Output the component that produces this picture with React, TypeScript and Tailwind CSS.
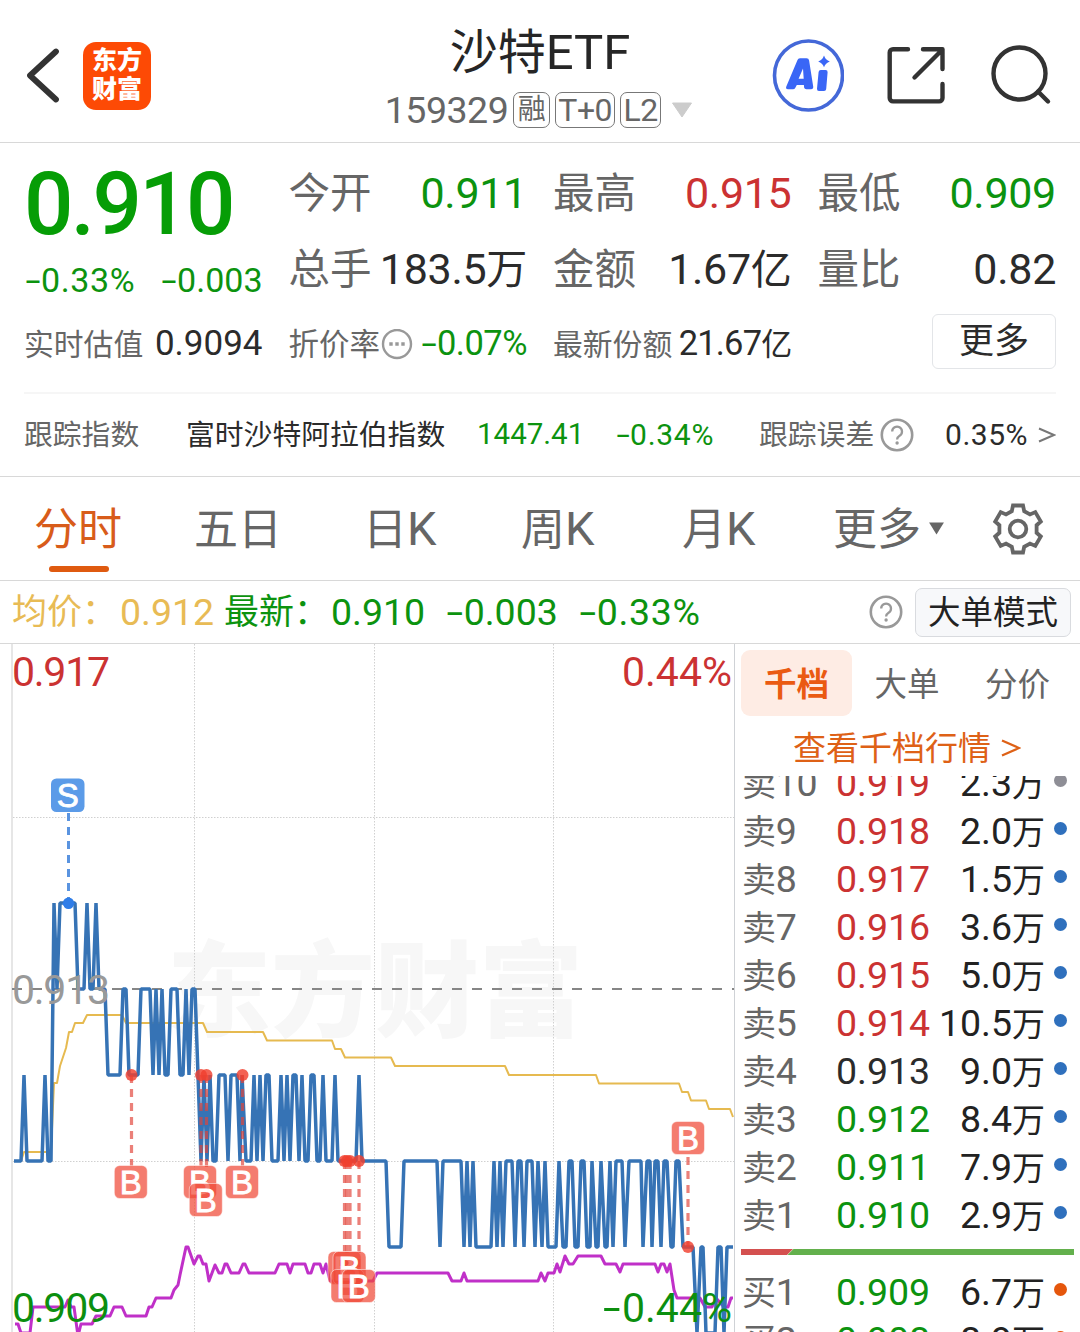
import { Fragment } from "react";
import clsx from "clsx";

const GREEN = "text-[#0c930f]";
const RED = "text-[#cb3232]";
const DARK = "text-[#2b2b2b]";
const GREY = "text-[#666666]";

// The hyphen is stretched so it reads as a minus sign of digit width.
function Num({ children, className }: { children: string; className?: string }) {
  return (
    <span className={clsx("whitespace-nowrap", className)}>
      {children.split(/(-)/).map((part, i) =>
        part === "-" ? (
          <span key={i} className="inline-block w-[0.47em] origin-center scale-x-[1.6] text-center tracking-normal">
            -
          </span>
        ) : (
          <Fragment key={i}>{part}</Fragment>
        ),
      )}
    </span>
  );
}

function Help({ className }: { className?: string }) {
  return (
    <svg viewBox="0 0 34 34" className={clsx("shrink-0", className)} fill="none" stroke="#999" strokeWidth="2.6">
      <circle cx="17" cy="17" r="15.2" />
      <path d="M12.2 13.6a4.9 4.9 0 1 1 7.4 4.2c-1.7 1.1-2.5 1.9-2.5 3.6" strokeWidth="2.3" />
      <circle cx="17.1" cy="25" r="1.7" fill="#999" stroke="none" />
    </svg>
  );
}

function Header() {
  return (
    <header className="flex h-[143px] border-b border-[#d8d8d8]">
      <div className="flex w-[384px] shrink-0 pl-[26px] pt-[41px]">
        <svg viewBox="0 0 34 70" className="h-[70px] w-[34px]" fill="none" stroke="#333" strokeWidth="5.8" strokeLinecap="round" strokeLinejoin="round">
          <path d="M30 10.500 4 34.500l26 24" />
        </svg>
        <div className="ml-[23px] mt-[0.500px] flex h-[68px] w-[68px] flex-col items-center justify-center rounded-[13px] bg-[#fd4a05] pb-px text-[25px] leading-[29px] font-black text-white">
          <span>东方</span>
          <span>财富</span>
        </div>
      </div>

      <div className="flex w-[312px] shrink-0 flex-col items-center">
        <h1 className="mt-[23px] flex items-baseline text-[48px] leading-[60px] text-[#262626]">
          沙特<span className="text-[49px] leading-[60px]">ETF</span>
        </h1>
        <div className={clsx("mt-[8px] flex items-center", GREY)}>
          <span className="mr-[5px] text-[37.500px] leading-[38px] tracking-[-0.5px]">159329</span>
          <span className="mr-[5px] h-[36px] w-[37px] rounded-[7px] border border-[#777] text-center text-[28px] leading-[34px]">融</span>
          <span className="mr-[5px] h-[36px] w-[60px] rounded-[7px] border border-[#777] text-center text-[32px] leading-[34px] tracking-[-0.5px]">T+0</span>
          <span className="h-[36px] w-[41px] rounded-[7px] border border-[#777] text-center text-[32px] leading-[34px] tracking-[-0.5px]">L2</span>
          <svg viewBox="0 0 22 16" className="ml-[10px] mr-[2px] h-4 w-[22px]">
            <path d="M1.500 1h19L11 15z" fill="#ccc" stroke="#ccc" strokeLinejoin="round" />
          </svg>
        </div>
      </div>

      <div className="flex pl-[76px] pt-[39px]">
        <svg viewBox="0 0 72 74" className="h-[74px] w-[72px]" fill="#3a66f6">
          <ellipse cx="36.500" cy="36.500" rx="34" ry="34.500" fill="none" stroke="#4468d8" strokeWidth="3.600" />
          <path
            fillRule="evenodd"
            d="M25.500 21Q26 19.300 28 19.300H34.500Q36.800 19.300 37.100 21.500L41.200 47.500Q41.500 50.300 39 50.300H34.500Q32.400 50.300 32.100 48.500L31.900 46H24.800L23.200 49Q22.500 50.300 21 50.300H16Q13.300 50.300 14.300 47.500ZM31 29.500 26.600 39.800H31.700Z"
          />
          <path d="M48.800 31H53.500Q55.800 31 55.600 33.300L54.200 50Q54 52 52 52H47Q44.800 52 45 49.800L46.600 33Q46.800 31 48.800 31Z" />
          <path d="M52 16.500Q53.500 21 57.800 22.400 53.500 23.800 52 28.300 50.500 23.800 46.200 22.400 50.500 21 52 16.500Z" />
        </svg>
        <svg viewBox="0 0 60 60" className="ml-[42px] mt-[6px] h-[60px] w-[60px]" fill="none" stroke="#333" strokeWidth="4.400" strokeLinecap="round" strokeLinejoin="round">
          <path d="M22 4.200H7a3.300 3.300 0 0 0-3.300 3.300v45.600a3.300 3.300 0 0 0 3.300 3.300h46.200a3.300 3.300 0 0 0 3.300-3.300V39M37 4.200h19.500V24M55.500 5.500 28.500 32.500" />
        </svg>
        <svg viewBox="0 0 62 62" className="ml-[44px] mt-[6px] h-[62px] w-[62px]" fill="none" stroke="#333" strokeWidth="4.400" strokeLinecap="round">
          <ellipse cx="29.500" cy="28.500" rx="26" ry="26" />
          <path d="m48 46.500 10 10" />
        </svg>
      </div>
    </header>
  );
}

type Stat = { label: string; value: string; unit?: string; tone: string };

const stats: Stat[] = [
  { label: "今开", value: "0.911", tone: GREEN },
  { label: "最高", value: "0.915", tone: RED },
  { label: "最低", value: "0.909", tone: GREEN },
  { label: "总手", value: "183.5", unit: "万", tone: DARK },
  { label: "金额", value: "1.67", unit: "亿", tone: DARK },
  { label: "量比", value: "0.82", tone: DARK },
];

function Quote() {
  return (
    <section className="h-[334px] border-b border-[#d8d8d8] px-6">
      <div className="grid h-[251px] grid-cols-4 grid-rows-[76px_78px_62px] gap-x-[26px] border-b-2 border-[#f6f6f6] pt-[29px] leading-none">
        <div className={clsx("row-span-2 flex flex-col", GREEN)}>
          <span className="mt-[-11px] text-[87px] font-medium tracking-[-2.6px] text-[#069d06]">0.910</span>
          <div className="mt-[15px] flex justify-between pl-px text-[34px]">
            <Num className="tracking-[0.6px]">-0.33%</Num>
            <Num>-0.003</Num>
          </div>
        </div>
        {stats.map((s) => (
          <div key={s.label} className="flex items-baseline justify-between whitespace-nowrap">
            <span className={clsx("text-[41.500px]", GREY)}>{s.label}</span>
            <span className={clsx("text-[43px] tracking-[-0.3px]", s.tone)}>
              {s.value}
              {s.unit && <span className="text-[41px]">{s.unit}</span>}
            </span>
          </div>
        ))}

        <div className="flex items-baseline justify-between">
          <span className={clsx("text-[29.800px]", GREY)}>实时估值</span>
          <span className={clsx("text-[35px]", DARK)}>0.9094</span>
        </div>
        <div className="flex items-baseline justify-between">
          <span className={clsx("flex items-baseline text-[30.500px]", GREY)}>
            折价率
            <svg viewBox="0 0 32 32" className="my-[-4px] ml-px h-8 w-8 self-center">
              <circle cx="16" cy="15" r="14" fill="none" stroke="#999" strokeWidth="2.400" />
              <path d="M8.300 15h3.400m2.600 0h3.400m2.600 0h3.400" stroke="#999" strokeWidth="3.400" />
            </svg>
          </span>
          <Num className={clsx("text-[34.500px] tracking-[-0.500px]", GREEN)}>-0.07%</Num>
        </div>
        <div className="flex items-baseline justify-between whitespace-nowrap">
          <span className={clsx("text-[29.800px]", GREY)}>最新份额</span>
          <span className={clsx("text-[34.500px] tracking-[-0.8px]", DARK)}>
            21.67<span className="text-[31px]">亿</span>
          </span>
        </div>
        <button className="mt-[-12px] h-[55px] w-[124px] justify-self-end rounded-[6px] border-[1.500px] border-[#e3e5e8] text-[35px] leading-[52px] text-[#2b2b2b]">
          更多
        </button>
      </div>

      <div className="flex h-[82px] items-center whitespace-nowrap text-[28.800px] leading-none">
        <span className={clsx("w-[162px]", GREY)}>跟踪指数</span>
        <span className={clsx("w-[291px]", DARK)}>富时沙特阿拉伯指数</span>
        <Num className={clsx("w-[139px] text-[29.500px]", GREEN)}>1447.41</Num>
        <Num className={clsx("mt-[-1px] w-[143px] text-[30px] tracking-[0.7px]", GREEN)}>-0.34%</Num>
        <span className={GREY}>跟踪误差</span>
        <Help className="ml-[6px] mt-[-1px] h-[34px] w-[34px]" />
        <span className={clsx("ml-auto mt-[-1px] text-[30px] tracking-[0.5px]", DARK)}>0.35%</span>
        <svg viewBox="0 0 18 18" className="ml-[10px] h-[18px] w-[18px]" fill="none" stroke="#777" strokeWidth="2">
          <path d="m1 2.500 15 6.500-15 6.500" />
        </svg>
      </div>
    </section>
  );
}

const periods = [
  { label: "分时", letter: "", width: "w-[160px]" },
  { label: "五日", letter: "", width: "w-[169px]" },
  { label: "日", letter: "K", width: "w-[158px]" },
  { label: "周", letter: "K", width: "w-[161px]" },
  { label: "月", letter: "K", width: "w-[151px]" },
];

function PeriodTabs() {
  return (
    <nav className={clsx("flex h-[104px] border-b border-[#d8d8d8] pl-[34px] text-[44px] leading-[107px]", GREY)}>
      {periods.map((p, i) => (
        <div key={p.label} className={clsx("relative shrink-0", p.width, i === 0 && "text-[#d85c1a]")}>
          {p.label}
          {p.letter && <span className="text-[47px] leading-none">{p.letter}</span>}
          {i === 0 && <span className="absolute left-[15px] top-[89px] h-[6px] w-[60px] rounded-full bg-[#df5a10]" />}
        </div>
      ))}
      <span>更多</span>
      <svg viewBox="0 0 16 14" className="ml-[8px] mt-[45px] h-[13px] w-[15px]">
        <path d="M0 .5h16L8 13.500z" fill="#666" />
      </svg>
      <svg viewBox="-27 -27 54 54" className="ml-[47px] mt-[24.500px] h-[54px] w-[54px]" fill="none" stroke="#666" strokeWidth="3.800">
        <path d="M-5-23.500H5L6.200-17.800 12-14.600 17.300-16.900 22.800-7.500 18.600-3.800V3.800L22.800 7.500 17.300 16.900 12 14.600 6.200 17.800 5 23.500H-5L-6.200 17.800-12 14.600-17.300 16.900-22.800 7.500-18.600 3.800V-3.800L-22.800-7.500-17.300-16.900-12-14.600-6.200-17.800Z" />
        <circle r="8.300" />
      </svg>
    </nav>
  );
}

function PriceBar() {
  return (
    <div className="flex h-[63px] items-center border-b border-[#d8d8d8] pl-3 pr-[9px] text-[37.500px] leading-[62px] whitespace-nowrap">
      <span className="mt-[2px] w-[108px] text-[35px] text-[#e8bb55]">均价：</span>
      <span className="w-[104px] text-[#e8bb55]">0.912</span>
      <span className={clsx("mt-[2px] w-[107px] text-[35px]", GREEN)}>最新：</span>
      <Num className={clsx("w-[115px]", GREEN)}>0.910</Num>
      <Num className={clsx("w-[133px]", GREEN)}>-0.003</Num>
      <Num className={clsx("tracking-[0.7px]", GREEN)}>-0.33%</Num>
      <Help className="ml-auto mr-3 h-[34px] w-[34px]" />
      <button className="h-[49px] w-[156px] rounded-[7px] border-[1.500px] border-[#d9dbdf] bg-[#f7f8fa] text-[32.500px] leading-[48px] text-[#222]">
        大单模式
      </button>
    </div>
  );
}

// [x, price] – price in thousandths above 0.910
const price: [number, number][] = [
  [14, 1], [21, 1], [24, 2], [27, 1], [42, 1], [45, 2], [48, 1], [51, 1], [54, 4], [57, 3], [60, 4], [75, 4],
  [78, 3], [84, 3], [87, 4], [90, 3], [93, 3], [96, 4], [99, 3], [105, 3], [108, 2], [120, 2], [123, 3], [126, 3],
  [129, 2], [138, 2], [141, 3], [150, 3], [153, 2], [156, 3], [159, 2], [162, 3], [165, 2], [168, 2], [171, 3],
  [177, 3], [180, 2], [183, 2], [186, 3], [189, 2], [192, 3], [195, 3], [198, 2], [201, 1], [204, 2], [207, 1],
  [210, 2], [213, 1], [216, 1], [219, 2], [225, 2], [228, 1], [231, 2], [237, 2], [240, 1], [242, 2], [246, 1],
  [251, 1], [254, 2], [257, 1], [260, 2], [263, 1], [266, 2], [269, 2], [272, 1], [278, 1], [281, 2], [284, 1],
  [287, 2], [290, 1], [293, 2], [296, 2], [299, 1], [302, 2], [305, 1], [308, 1], [311, 2], [314, 2], [317, 1],
  [320, 1], [323, 2], [326, 1], [332, 1], [335, 2], [338, 1], [356, 1], [359, 2], [362, 1], [386, 1], [389, 0],
  [401, 0], [404, 1], [437, 1], [440, 0], [443, 1], [461, 1], [464, 0], [467, 1], [470, 0], [473, 1], [476, 0],
  [491, 0], [494, 1], [497, 0], [500, 1], [503, 0], [506, 1], [512, 1], [515, 0], [518, 1], [521, 1], [524, 0],
  [527, 1], [532, 1], [535, 0], [538, 1], [542, 0], [545, 1], [548, 0], [556, 0], [559, 1], [563, 0], [566, 0],
  [569, 1], [572, 1], [575, 0], [578, 0], [581, 1], [584, 1], [587, 0], [590, 0], [592, 1], [596, 0], [598, 0],
  [601, 1], [605, 0], [607, 0], [610, 1], [613, 0], [616, 1], [622, 1], [625, 0], [629, 1], [641, 1], [643, 0],
  [647, 1], [650, 1], [652, 0], [655, 1], [658, 1], [661, 0], [664, 1], [667, 1], [671, 0], [673, 0], [676, 1],
  [679, 1], [683, 0], [693, 0], [697, -1], [701, 0], [703, 0], [706, -1], [715, -1], [718, 0], [721, 0], [724, -1],
  [727, 0], [733, 0],
];

const pricePoints = price.map(([x, p]) => `${x},${1247 - 86 * p}`).join(" ");

const averagePoints =
  "14,1161 21,1161 24,1152 51,1152 54,1083 57,1083 60,1066 66,1048 69,1032 72,1032 75,1023 83,1023 87,1015 122,1015 126,1023 203,1023 207,1032 263,1032 267,1040.5 332,1040.5 335,1049 341,1049 345,1057.5 391,1057.5 395,1066 505,1066 509,1075 596,1075 599,1083.5 679,1083.5 682,1092 688,1092 691,1100.5 706,1100.5 709,1109 730,1109 733,1117";

const netValuePoints =
  "15,1324 18,1324 21,1333 30,1333 33,1307 65,1307 68,1300 71,1307 74,1307 78,1336 81,1324 92,1324 96,1316 110,1316 114,1307 122,1307 126,1316 146,1316 149,1307 152,1307 156,1298 171,1298 174,1290 178,1285 180,1275 186,1247 188,1247 194,1264 198,1256 200,1256 203,1264 206,1264 209,1281 215,1265 219,1273 222,1273 225,1264 227,1264 231,1273 239,1273 243,1264 245,1264 249,1273 275,1273 279,1264 287,1264 290,1273 293,1264 305,1264 308,1273 311,1273 314,1264 320,1264 323,1273 326,1264 330,1281 373,1281 377,1273 448,1273 452,1281 461,1281 464,1273 467,1281 538,1281 541,1273 545,1281 548,1273 554,1273 557,1264 560,1272 565,1256 569,1264 573,1264 578,1256 601,1256 605,1264 616,1264 620,1272 623,1264 655,1264 658,1272 661,1264 664,1264 667,1272 670,1264 674,1290 677,1298 700,1298 705,1307 712,1307 716,1298 724,1307 728,1307 731,1298 733,1298";

// dot = where the trade sits on the line, box = centre of its tag
const buys = [
  { x: 131.5, dot: 1075, bx: 130.8, box: 1182 },
  { x: 201, dot: 1075, bx: 200, box: 1182 },
  { x: 206.5, dot: 1075, bx: 205.8, box: 1200 },
  { x: 242.5, dot: 1075, bx: 242, box: 1182 },
  { x: 344.5, dot: 1161, bx: 344.5, box: 1268 },
  { x: 350, dot: 1161, bx: 349.5, box: 1268 },
  { x: 347, dot: 1161, bx: 347.5, box: 1286 },
  { x: 359, dot: 1161, bx: 358.8, box: 1286 },
  { x: 688, dot: 1247, bx: 688, box: 1138 },
];

function Chart() {
  return (
    <svg viewBox="0 644 734 688" className="h-[688px] w-[735px] shrink-0 border-r border-[#cfd2d6]">
      <text x="167" y="1029" fontSize="104" fontWeight="900" fill="#f7f7f7" textLength="416">
        东方财富
      </text>
      <path d="M12 644V1332" stroke="#dedede" strokeWidth="1.500" />
      <path d="M194.500 644V1332M374.500 644V1332M553.500 644V1332M13 817.500H734M13 1161.500H734" stroke="#d0d0d0" strokeDasharray="1.500 1.500" />
      <path d="M12 989H734" stroke="#868686" strokeWidth="1.800" strokeDasharray="10 10" />
      <polyline points={averagePoints} fill="none" stroke="#e6ba50" strokeWidth="2" strokeLinejoin="round" />
      <polyline points={netValuePoints} fill="none" stroke="#c030c8" strokeWidth="3" strokeLinejoin="round" />
      <polyline points={pricePoints} fill="none" stroke="#3673b5" strokeWidth="3.500" strokeLinejoin="bevel" />

      <g fontSize="41">
        <text x="12" y="686" fill="#cb3232" textLength="98">0.917</text>
        <text x="732" y="686" fill="#cb3232" textAnchor="end" textLength="110">0.44%</text>
        <text x="12" y="1004" fill="#999" textLength="98">0.913</text>
        <text x="12" y="1322" fill="#0c8f0f" textLength="98">0.909</text>
        <text x="732" y="1322" fill="#0c8f0f" textAnchor="end" textLength="110">0.44%</text>
        <text transform="translate(603 1322) scale(1.55 1)" fill="#0c8f0f">-</text>
      </g>

      <path d="M68.500 813V903" stroke="#5a94e0" strokeWidth="3" strokeDasharray="8 6" />
      <path d="M62 903H75L72 908Q68.500 910 65 908Z" fill="#2f7de8" />
      <circle cx="68.500" cy="903" r="5.500" fill="#2f7de8" />
      <rect x="51" y="778.500" width="33.500" height="33.500" rx="5.500" fill="#5b9be8" />

      {buys.map((b) => (
        <g key={b.bx}>
          <path
            d={b.box > b.dot ? `M${b.x} ${b.dot}V${b.box - 16}` : `M${b.x} ${b.box + 19}V${b.dot}`}
            stroke="#e2443a"
            strokeOpacity=".68"
            strokeWidth="3.200"
            strokeDasharray="8 6"
          />
          <circle cx={b.x} cy={b.dot} r="6" fill="#f0402e" fillOpacity=".82" />
        </g>
      ))}
      <g className="font-['Liberation_Sans',sans-serif]" fontSize="33" fill="#fff" stroke="#fff" strokeWidth=".9" textAnchor="middle">
        <text x="67.800" y="807">S</text>
        {buys.map((b) => (
          <g key={b.bx}>
            <rect x={b.bx - 16.5} y={b.box - 16.5} width="33" height="33" rx="5.500" fill="#f04a38" fillOpacity=".72" strokeWidth="1" strokeOpacity=".5" />
            <text x={b.bx} y={b.box + 11.5}>B</text>
          </g>
        ))}
      </g>
    </svg>
  );
}

type Level = { side: string; n: string; price: string; volume: string; tone: string; dot: string };

const BLUE_DOT = "bg-[#2f70bd]";

const asks: Level[] = [
  { side: "卖", n: "10", price: "0.919", volume: "2.3", tone: RED, dot: "bg-[#8e8e96]" },
  { side: "卖", n: "9", price: "0.918", volume: "2.0", tone: RED, dot: BLUE_DOT },
  { side: "卖", n: "8", price: "0.917", volume: "1.5", tone: RED, dot: BLUE_DOT },
  { side: "卖", n: "7", price: "0.916", volume: "3.6", tone: RED, dot: BLUE_DOT },
  { side: "卖", n: "6", price: "0.915", volume: "5.0", tone: RED, dot: BLUE_DOT },
  { side: "卖", n: "5", price: "0.914", volume: "10.5", tone: RED, dot: BLUE_DOT },
  { side: "卖", n: "4", price: "0.913", volume: "9.0", tone: DARK, dot: BLUE_DOT },
  { side: "卖", n: "3", price: "0.912", volume: "8.4", tone: GREEN, dot: BLUE_DOT },
  { side: "卖", n: "2", price: "0.911", volume: "7.9", tone: GREEN, dot: BLUE_DOT },
  { side: "卖", n: "1", price: "0.910", volume: "2.9", tone: GREEN, dot: BLUE_DOT },
];

const bids: Level[] = [
  { side: "买", n: "1", price: "0.909", volume: "6.7", tone: GREEN, dot: "bg-[#e5560c]" },
  { side: "买", n: "2", price: "0.908", volume: "8.9", tone: GREEN, dot: "bg-[#e5560c]" },
];

function LevelRow({ level }: { level: Level }) {
  return (
    <li className="flex h-12 shrink-0 whitespace-nowrap text-[37.500px] leading-[48px]">
      <span className={clsx("w-[94px] tracking-[-0.3px]", GREY)}>
        <span className="text-[34px]">{level.side}</span>
        {level.n}
      </span>
      <span className={level.tone}>{level.price}</span>
      <span className="ml-auto text-[#222]">
        {level.volume}
        <span className="text-[33px]">万</span>
      </span>
      <span className={clsx("ml-[9px] mt-[15px] h-[13px] w-[13px] rounded-full", level.dot)} />
    </li>
  );
}

function OrderBook() {
  return (
    <aside className="flex min-w-0 flex-1 flex-col pl-[6px] pt-[6px]">
      <div className={clsx("flex h-[66px] text-[32.500px] leading-[70px]", GREY)}>
        <span className="h-[66px] w-[111px] rounded-[9px] bg-[#feece4] text-center font-bold text-[#ea5a12]">千档</span>
        <span className="w-[110px] text-center">大单</span>
        <span className="w-[111px] text-center">分价</span>
      </div>
      <a className="flex h-[60px] items-center justify-center pr-[7px] pt-[4px] text-[33px] leading-none text-[#de6116]">
        查看千档行情
        <svg viewBox="0 0 20 20" className="ml-[10px] h-5 w-5" fill="none" stroke="#de6116" strokeWidth="2.200">
          <path d="m1 2.500 17 7.500-17 7.500" />
        </svg>
      </a>
      <div className="flex h-[556px] flex-col overflow-hidden pl-[1px] pr-[13px]">
        <ul className="mt-[-17px] flex flex-col">
          {asks.map((level) => (
            <LevelRow key={level.n} level={level} />
          ))}
        </ul>
        <svg viewBox="0 0 333 6" className="mb-[13px] ml-[-1px] mt-[10px] h-[6px] w-[333px] shrink-0">
          <path d="M0 0H52L46 6H0z" fill="#d4504f" />
          <path d="M52.500 0H333V6H46.500z" fill="#63b04c" />
        </svg>
        <ul className="flex shrink-0 flex-col">
          {bids.map((level) => (
            <LevelRow key={level.n} level={level} />
          ))}
        </ul>
      </div>
    </aside>
  );
}

export default function App() {
  return (
    <main className="h-[1332px] w-[1080px] overflow-hidden bg-white font-['Roboto','Noto_Sans_CJK_SC',sans-serif]">
      <Header />
      <Quote />
      <PeriodTabs />
      <PriceBar />
      <div className="flex">
        <Chart />
        <OrderBook />
      </div>
    </main>
  );
}
